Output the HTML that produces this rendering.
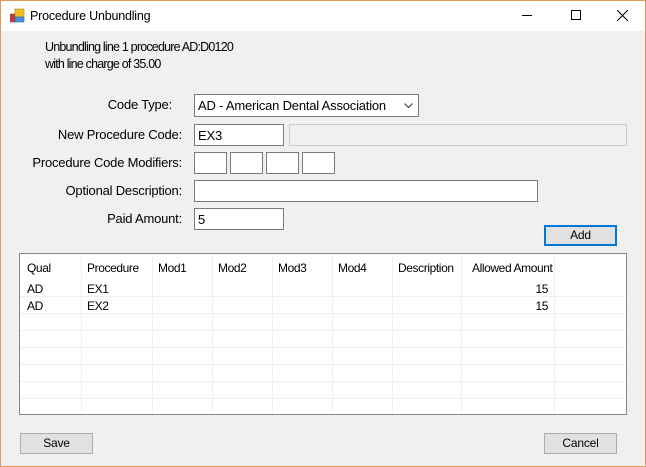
<!DOCTYPE html>
<html><head><style>
*{box-sizing:border-box;margin:0;padding:0}
body{width:646px;height:467px;overflow:hidden;background:#f0f0f0;font-family:"Liberation Sans",sans-serif;font-size:13px;color:#000;position:relative;letter-spacing:-0.2px}
.win{position:absolute;left:0;top:0;width:646px;height:467px;border:1px solid #e09a5a}
.title{position:absolute;left:1px;top:1px;width:644px;height:30px;background:#fff}
.a{position:absolute;white-space:nowrap}
.lb{position:absolute;white-space:nowrap;right:464px;text-align:right}
.box{position:absolute;background:#fff;border:1px solid #7a7a7a;padding:3px 0 0 3px}
.btn{position:absolute;background:#e1e1e1;border:1px solid #adadad;text-align:center;line-height:19px;font-size:12px}
.lv{position:absolute;left:19px;top:253px;width:608px;height:162px;background:#fff;border:1px solid #828790;overflow:hidden;font-size:12px;letter-spacing:-0.4px}
.vl{position:absolute;top:0;width:1px;height:160px;background:#f0f0f0}
.hl{position:absolute;left:0;width:606px;height:1px;background:#f0f0f0}
.r{text-align:right}
</style></head><body>
<div class="win"></div>
<div class="title">
<svg style="position:absolute;left:9px;top:7px" width="16" height="16"><rect x="0" y="6" width="5" height="8" fill="#c33" stroke="#666" stroke-width=".6"/><rect x="5" y="1" width="9" height="8" fill="#f0c020" stroke="#a80" stroke-width=".6"/><rect x="5" y="9" width="9" height="5" fill="#4a8ee0" stroke="#36a" stroke-width=".6"/></svg>
<div class="a" style="left:29px;top:8px;font-size:12.5px">Procedure Unbundling</div>
<div class="a" style="left:521px;top:14px;width:10px;height:1px;background:#000"></div>
<div class="a" style="left:570px;top:9px;width:10px;height:10px;border:1px solid #000"></div>
<svg style="position:absolute;left:616px;top:9px" width="11" height="11"><path d="M0 0L11 11M11 0L0 11" stroke="#000" stroke-width="1"/></svg>
</div>
<div class="a" style="left:45px;top:40px;font-size:12.5px;letter-spacing:-0.8px">Unbundling line 1 procedure AD:D0120</div>
<div class="a" style="left:45px;top:57px;font-size:12.5px;letter-spacing:-0.8px">with line charge of 35.00</div>
<div class="lb" style="right:474px;top:97px">Code Type:</div>
<div class="box" style="left:194px;top:94px;width:225px;height:23px;padding-top:3px">AD - American Dental Association<svg style="position:absolute;right:5px;top:8px" width="9" height="6"><path d="M0.5 0.5L4.5 4.5L8.5 0.5" stroke="#333" fill="none"/></svg></div>
<div class="lb" style="top:127px">New Procedure Code:</div>
<div class="box" style="left:194px;top:124px;width:90px;height:22px">EX3</div>
<div class="box" style="left:289px;top:124px;width:338px;height:22px;background:#f0f0f0;border-color:#ccc"></div>
<div class="lb" style="top:155px">Procedure Code Modifiers:</div>
<div class="box" style="left:194px;top:152px;width:33px;height:22px"></div>
<div class="box" style="left:230px;top:152px;width:33px;height:22px"></div>
<div class="box" style="left:266px;top:152px;width:33px;height:22px"></div>
<div class="box" style="left:302px;top:152px;width:33px;height:22px"></div>
<div class="lb" style="top:183px">Optional Description:</div>
<div class="box" style="left:194px;top:180px;width:344px;height:22px"></div>
<div class="lb" style="top:211px">Paid Amount:</div>
<div class="box" style="left:194px;top:208px;width:90px;height:22px">5</div>
<div class="btn" style="left:544px;top:225px;width:73px;height:21px;border:2px solid #0078d7;line-height:17px">Add</div>
<div class="lv">
<div class="vl" style="left:61px"></div><div class="vl" style="left:132px"></div><div class="vl" style="left:192px"></div><div class="vl" style="left:252px"></div><div class="vl" style="left:312px"></div><div class="vl" style="left:372px"></div><div class="vl" style="left:441px"></div><div class="vl" style="left:534px"></div>
<div class="hl" style="top:42px"></div><div class="hl" style="top:59px"></div><div class="hl" style="top:76px"></div><div class="hl" style="top:93px"></div><div class="hl" style="top:110px"></div><div class="hl" style="top:127px"></div><div class="hl" style="top:144px"></div>
<div class="a" style="left:7px;top:7px">Qual</div><div class="a" style="left:67px;top:7px">Procedure</div><div class="a" style="left:138px;top:7px">Mod1</div><div class="a" style="left:198px;top:7px">Mod2</div><div class="a" style="left:258px;top:7px">Mod3</div><div class="a" style="left:318px;top:7px">Mod4</div><div class="a" style="left:378px;top:7px">Description</div><div class="a" style="left:452px;top:7px">Allowed Amount</div>
<div class="a" style="left:7px;top:28px">AD</div><div class="a" style="left:67px;top:28px">EX1</div><div class="a r" style="left:480px;top:28px;width:48px">15</div>
<div class="a" style="left:7px;top:45px">AD</div><div class="a" style="left:67px;top:45px">EX2</div><div class="a r" style="left:480px;top:45px;width:48px">15</div>
</div>
<div class="btn" style="left:20px;top:433px;width:73px;height:21px">Save</div>
<div class="btn" style="left:544px;top:433px;width:73px;height:21px">Cancel</div>
</body></html>
